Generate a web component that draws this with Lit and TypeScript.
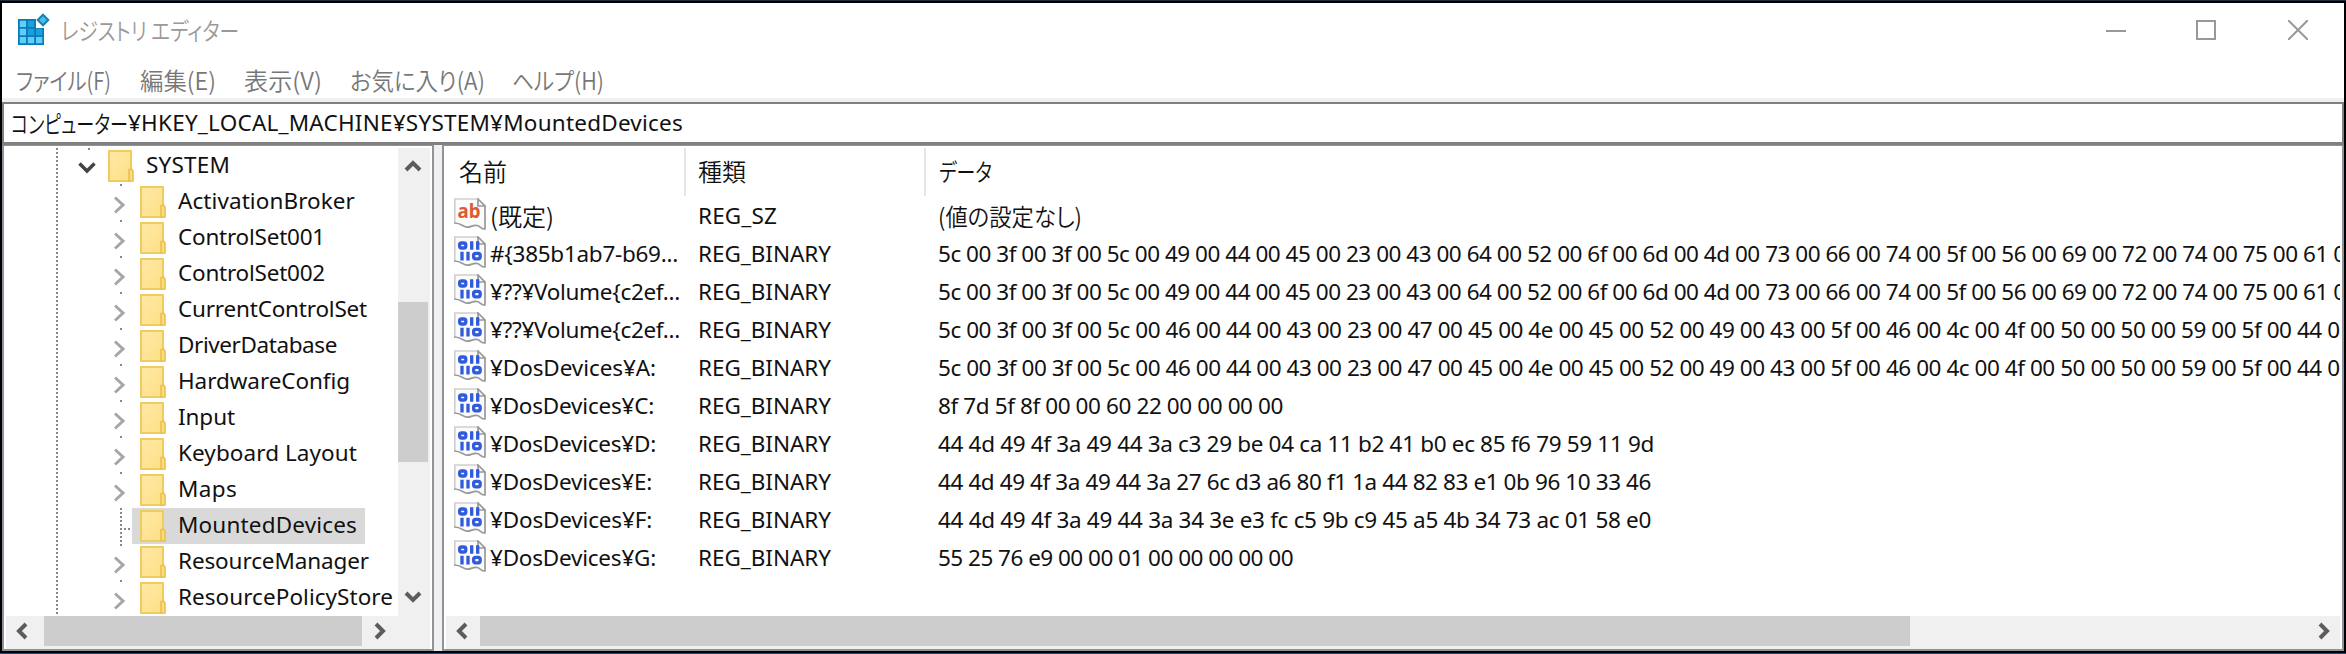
import { LitElement, html, css, svg } from "lit";
import { customElement, property } from "lit/decorators.js";

/** A single line of text set to a given advance width. */
@customElement("fit-text")
class FitText extends LitElement {
  @property() text = "";
  @property({ type: Number }) width = 0;
  /** "space" adjusts tracking, "scale" condenses the glyphs. */
  @property() mode = "space";

  static styles = css`
    :host { display: block; white-space: pre; overflow: visible; }
    .t { display: inline-block; transform-origin: 0 50%; }
  `;

  updated() {
    const el = this.renderRoot.querySelector(".t") as HTMLElement;
    el.style.letterSpacing = "";
    el.style.transform = "";
    const natural = el.getBoundingClientRect().width;
    if (!this.width || !natural) return;
    if (this.mode === "scale") el.style.transform = `scaleX(${this.width / natural})`;
    else el.style.letterSpacing = `${(this.width - natural) / this.text.length}px`;
  }

  render() {
    return html`<span class="t">${this.text}</span>`;
  }
}

type Dir = "left" | "right" | "up" | "down";
const ARROWS: Record<Dir, string> = {
  left: "M13 2L6 9l7 7",
  right: "M5 2l7 7-7 7",
  up: "M2 13l7-7 7 7",
  down: "M2 5l7 7 7-7",
};
const arrow = (d: Dir) => html`<svg class="arrow" width="18" height="18" viewBox="0 0 18 18">
  <path d=${ARROWS[d]} fill="none" stroke="#5c5c5c" stroke-width="4" /></svg>`;

const folder = html`<svg class="folder" width="26" height="32" viewBox="0 0 26 32">
  <defs><linearGradient id="g" x1="0" y1="0" x2="1" y2="1">
    <stop offset="0" stop-color="#ffe9a8" /><stop offset="1" stop-color="#fde083" /></linearGradient></defs>
  <rect x="1" y="1" width="22" height="30" fill="url(#g)" stroke="#f0cb5e" stroke-width="2" />
  <path d="M21 31V19.5h3l1 1.5V31z" fill="#fbdc7c" stroke="#ecc050" stroke-width="1.6" />
</svg>`;

const page = svg`
  <path d="M.8 25V1H24l7 7v23c-4 .5-4-3-8-3.500-5-.8-6 2.300-10 1.800C9 28.800 7 24.500 .8 25z" fill="#fbfbfb" />
  <path d="M.8 25V1H24" fill="none" stroke="#cfcfcf" stroke-width="1.700" />
  <path d="M24 1v7h7zM31 8v23c-4 .3-4.500-3-8-3.500-4.500-.6-6.500 2-10 1.700C9 28.800 7 24.800 0 25" fill="none" stroke="#999" stroke-width="1.700" />
`;
const stringIcon = html`<svg width="32" height="32" viewBox="0 0 32 32">${page}
  <text x="3.500" y="20" class="ab" textLength="23" lengthAdjust="spacingAndGlyphs">ab</text></svg>`;
const binaryIcon = html`<svg width="32" height="32" viewBox="0 0 32 32">${page}
  <g fill="none" stroke="#2f5bdc" stroke-width="3.300">
    <rect x="5.600" y="7" width="6.200" height="5" rx="2" />
    <path d="M17.700 5.300v8.400M23.700 5.300v8.400M8 15.800v8.700M14 15.800v8.700" />
    <rect x="19.600" y="17.400" width="6.600" height="5.400" rx="2" />
  </g></svg>`;

const appIcon = html`<svg width="32" height="34" viewBox="0 0 32 34">
  <path d="M0 6h18v9h8v17H0z" fill="#0f79b8" />
  <path d="M1.800 7.800h6.200v6.200H1.800zM1.800 15.800h6.200v6.400H1.800zM1.800 24h6.200v6.300H1.800zM9.800 24h6.400v6.300H9.800zM18 24h6.300v6.300H18z" fill="#5cd0fb" />
  <path d="M9.800 7.800h6.400v6.200H9.800zM9.800 15.800h6.400v6.400H9.800zM18 15.800h6.300v6.400H18z" fill="#17a1de" />
  <path d="M25 1.700L30.300 7 25 12.300 19.700 7z" fill="#46c0ef" stroke="#1c7fae" stroke-width="2" />
</svg>`;

const MENU: [string, number, number][] = [
  ["ファイル(F)", 95, 29], ["編集(E)", 76, 28], ["表示(V)", 78, 28], ["お気に入り(A)", 135, 27], ["ヘルプ(H)", 92, 0],
];

const KEYS: [string, number][] = [
  ["ActivationBroker", 177], ["ControlSet001", 147], ["ControlSet002", 147], ["CurrentControlSet", 189],
  ["DriverDatabase", 159], ["HardwareConfig", 172], ["Input", 57], ["Keyboard Layout", 179], ["Maps", 59],
  ["MountedDevices", 179], ["ResourceManager", 191], ["ResourcePolicyStore", 215],
];

const IDE = "5c 00 3f 00 3f 00 5c 00 49 00 44 00 45 00 23 00 43 00 64 00 52 00 6f 00 6d 00 4d 00 73 00 66 00 74 00 5f 00 56 00 69 00 72 00 74 00 75 00 61 00";
const FDC = "5c 00 3f 00 3f 00 5c 00 46 00 44 00 43 00 23 00 47 00 45 00 4e 00 45 00 52 00 49 00 43 00 5f 00 46 00 4c 00 4f 00 50 00 50 00 59 00 5f 00 44 00";

const VALUES: [string, number, string, number][] = [
  ["#{385b1ab7-b69...", 188, IDE, 1420],
  ["¥??¥Volume{c2ef...", 190, IDE, 1420],
  ["¥??¥Volume{c2ef...", 190, FDC, 1414],
  ["¥DosDevices¥A:", 166, FDC, 1414],
  ["¥DosDevices¥C:", 164, "8f 7d 5f 8f 00 00 60 22 00 00 00 00", 345],
  ["¥DosDevices¥D:", 166, "44 4d 49 4f 3a 49 44 3a c3 29 be 04 ca 11 b2 41 b0 ec 85 f6 79 59 11 9d", 716],
  ["¥DosDevices¥E:", 162, "44 4d 49 4f 3a 49 44 3a 27 6c d3 a6 80 f1 1a 44 82 83 e1 0b 96 10 33 46", 713],
  ["¥DosDevices¥F:", 162, "44 4d 49 4f 3a 49 44 3a 34 3e e3 fc c5 9b c9 45 a5 4b 34 73 ac 01 58 e0", 713],
  ["¥DosDevices¥G:", 166, "55 25 76 e9 00 00 01 00 00 00 00 00", 355],
];

@customElement("app-root")
class AppRoot extends LitElement {
  static styles = css`
    :host {
      display: block; width: 2346px; height: 654px; overflow: hidden; background: #000;
      font-family: "Noto Sans", "Noto Sans CJK JP", sans-serif; font-size: 22.5px; color: #111;
    }
    * { box-sizing: border-box; }
    svg { display: block; flex: none; }
    fit-text { flex: none; }
    .jp { font-family: "Noto Sans CJK JP", sans-serif; font-size: 24px; font-feature-settings: "palt"; font-weight: 350; }
    .frame {
      display: flex; flex-direction: column; height: 654px;
      border-top: 1px solid #1d2c3c; border-bottom: 1px solid #1f4a73;
    }
    .window {
      flex: 1; display: flex; flex-direction: column; min-height: 0; background: #fff;
      border: 2px solid #000;
    }
    .title { display: flex; align-items: center; height: 58px; padding: 0 0 4px 16px; color: #999; flex: none; }
    .title .name { margin-left: 11px; line-height: 30px; flex: 1; }
    .controls { display: flex; align-items: center; padding-right: 36px; gap: 70px; }
    .controls .close { margin-left: 2px; }
    .menu { display: flex; height: 37px; padding: 0 0 0 14px; color: #777; flex: none; align-items: center; line-height: 34px; }
    .menu fit-text { margin-right: var(--gap); }
    .strip { height: 4px; background: #f0f0f0; flex: none; }
    .address {
      display: flex; align-items: center; height: 43px; flex: none; padding-left: 7px;
      border: 2px solid #808080; border-bottom-width: 3px; line-height: 38px; color: #111;
    }
    .panes { flex: 1; display: flex; background: #f0f0f0; min-height: 0; }
    .tree, .list { border: 2px solid #8f929b; border-top-width: 1px; background: #fff; min-width: 0; padding: 2px 2px 0; }
    .tree { width: 432px; display: flex; flex-direction: column; flex: none; }
    .list { margin-left: 8px; flex: 1; display: flex; flex-direction: column; }
    .upper { display: flex; height: 468px; flex: none; }
    .keys { width: 392px; height: 468px; position: relative; overflow: hidden; flex: none; }
    .rail { position: absolute; left: 50px; top: 0; width: 2px; height: 466px; }
    .dots-v { background: repeating-linear-gradient(#888 0 2px, #fff 2px 4px); }
    .dots-h { background: repeating-linear-gradient(90deg, #888 0 2px, #fff 2px 4px); }
    .key { display: flex; height: 36px; padding-left: 108px; }
    .key .branch { width: 18px; height: 36px; flex: none; position: relative; }
    .branch .tick { position: absolute; left: 6px; top: 0; width: 2px; height: 2px; background: #888; }
    .branch .stem { position: absolute; left: 6px; top: 0; width: 2px; height: 36px; }
    .branch .arm { position: absolute; left: 10px; top: 20px; width: 8px; height: 2px; }
    .branch svg { margin-top: 11px; }
    .cell { display: flex; height: 36px; padding: 2px 8px 0 8px; }
    .cell.on { background: #d9d9d9; }
    .cell fit-text { margin-left: 12px; line-height: 30px; }
    .root { padding-left: 72px; position: relative; }
    .root .tick { position: absolute; left: 82px; top: 0; width: 2px; height: 2px; background: #888; }
    .root > svg:first-of-type { margin-top: 14px; }
    .root .folder { margin: 2px 0 0 12px; }
    .root fit-text { margin-left: 12px; line-height: 34px; }
    .vbar { width: 32px; background: #f0f0f0; display: flex; flex-direction: column; align-items: center; padding: 9px 2px 10px 0; }
    .vbar .thumb { width: 30px; height: 160px; background: #cdcdcd; margin-top: 127px; margin-bottom: auto; }
    .hbar { height: 33px; background: #f0f0f0; display: flex; align-items: flex-start; flex: none; }
    .hbar .thumb { height: 30px; background: #cdcdcd; flex: none; }
    .hbar .arrow { margin-top: 6px; }
    .tree .before { width: 38px; padding-left: 7px; flex: none; }
    .tree .thumb { width: 318px; }
    .tree .after { padding-left: 9px; }
    .tree .vbar .thumb { width: 30px; }
    .list .before { width: 34px; padding-left: 7px; flex: none; }
    .list .hbar .thumb { width: 1430px; }
    .list .after { flex: 1; display: flex; justify-content: flex-end; padding-right: 7px; }
    .head { display: flex; height: 48px; flex: none; line-height: 45px; }
    .head .c1 { width: 240px; padding-left: 12px; border-right: 2px solid #e5e5e5; }
    .head .c0 { width: 240px; padding-left: 13px; border-right: 2px solid #e5e5e5; }
    .head .c2 { padding-left: 13px; }
    .rows { flex: 1; overflow: hidden; padding-top: 2px; }
    .row { display: flex; height: 38px; line-height: 35px; padding-left: 8px; }
    .row .c0 { width: 244px; display: flex; flex: none; gap: 4px; }
    .row .c1 { width: 240px; flex: none; }
    .ab { font: 700 19px "Noto Sans", sans-serif; fill: #dc5a35; }
  `;

  private branch(leaf: boolean) {
    return html`<div class="branch">
      ${leaf
        ? html`<div class="stem dots-v"></div><div class="arm dots-h"></div>`
        : html`<div class="tick"></div><svg width="14" height="20" viewBox="0 0 14 20">
            <path d="M1 2.500l8 7.500-8 7.500" fill="none" stroke="#a6a6a6" stroke-width="3" /></svg>`}
    </div>`;
  }

  render() {
    return html`<div class="frame"><div class="window">
      <div class="title">
        ${appIcon}
        <fit-text class="jp name" mode="scale" width="178" text="レジストリ エディター"></fit-text>
        <div class="controls">
          <svg width="20" height="20" viewBox="0 0 20 20"><path d="M0 11h20" stroke="#999" stroke-width="2" /></svg>
          <svg width="20" height="20" viewBox="0 0 20 20"><rect x="1" y="1" width="18" height="18" fill="none" stroke="#999" stroke-width="2" /></svg>
          <svg class="close" width="20" height="20" viewBox="0 0 20 20"><path d="M0 0l20 20M20 0L0 20" stroke="#999" stroke-width="2" /></svg>
        </div>
      </div>
      <div class="menu">
        ${MENU.map(([t, w, g]) => html`<fit-text class="jp" mode="scale" .text=${t} .width=${w} style="width:${w}px;--gap:${g}px"></fit-text>`)}
      </div>
      <div class="strip"></div>
      <div class="address">
        <fit-text class="jp" mode="scale" text="コンピューター" width="117" style="width:117px"></fit-text>
        <fit-text text="¥HKEY_LOCAL_MACHINE¥SYSTEM¥MountedDevices" width="555"></fit-text>
      </div>
      <div class="panes">
        <div class="tree">
          <div class="upper">
            <div class="keys">
              <div class="rail dots-v"></div>
              <div class="key root">
                <div class="tick"></div>
                <svg width="18" height="12" viewBox="0 0 18 12"><path d="M1.500 1.500L9 9l7.500-7.500" fill="none" stroke="#444" stroke-width="3.500" /></svg>
                ${folder}
                <fit-text text="SYSTEM" width="84"></fit-text>
              </div>
              ${KEYS.map(([t, w]) => html`<div class="key">
                ${this.branch(t === "MountedDevices")}
                <div class="cell ${t === "MountedDevices" ? "on" : ""}">${folder}<fit-text .text=${t} .width=${w}></fit-text></div>
              </div>`)}
            </div>
            <div class="vbar">${arrow("up")}<div class="thumb"></div>${arrow("down")}</div>
          </div>
          <div class="hbar">
            <div class="before">${arrow("left")}</div><div class="thumb"></div><div class="after">${arrow("right")}</div>
          </div>
        </div>
        <div class="list">
          <div class="head">
            <div class="c0"><fit-text class="jp" text="名前" width="48"></fit-text></div>
            <div class="c1"><fit-text class="jp" text="種類" width="48"></fit-text></div>
            <div class="c2"><fit-text class="jp" mode="scale" text="データ" width="53"></fit-text></div>
          </div>
          <div class="rows">
            <div class="row">
              <div class="c0">${stringIcon}<fit-text class="jp" mode="scale" text="(既定)" width="64"></fit-text></div>
              <div class="c1"><fit-text text="REG_SZ" width="79"></fit-text></div>
              <fit-text class="jp" mode="scale" text="(値の設定なし)" width="144"></fit-text>
            </div>
            ${VALUES.map(([n, nw, d, dw]) => html`<div class="row">
              <div class="c0">${binaryIcon}<fit-text .text=${n} .width=${nw}></fit-text></div>
              <div class="c1"><fit-text text="REG_BINARY" width="133"></fit-text></div>
              <fit-text .text=${d} .width=${dw}></fit-text>
            </div>`)}
          </div>
          <div class="hbar">
            <div class="before">${arrow("left")}</div><div class="thumb"></div><div class="after">${arrow("right")}</div>
          </div>
        </div>
      </div>
    </div></div>`;
  }
}
